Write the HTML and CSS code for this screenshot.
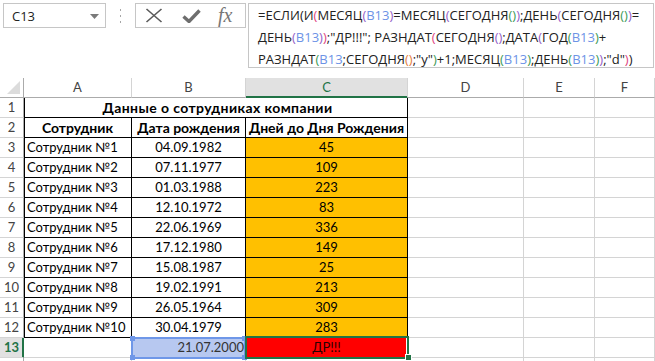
FILE: index.html
```html
<!DOCTYPE html>
<html lang="ru">
<head>
<meta charset="utf-8">
<title>Excel</title>
<link rel="stylesheet" href="styles.css">
</head>
<body>
<div class="fbar">
  <div class="namebox">
    <span class="nb-text">C13</span>
    <svg class="nb-arrow" width="9" height="5" viewBox="0 0 9 5"><path d="M0 0H9L4.5 5Z" fill="#7a7a7a"/></svg>
  </div>
  <div class="grip">
    <svg width="3" height="14" viewBox="0 0 3 14"><rect x="1" y="0" width="1" height="2" fill="#a6a6a6"/><rect x="1" y="6" width="1" height="2" fill="#a6a6a6"/><rect x="1" y="12" width="1" height="2" fill="#a6a6a6"/></svg>
  </div>
  <div class="btns">
    <svg class="ic-x" width="18" height="15" viewBox="0 0 18 15"><path d="M1.5 1L16.5 14M16.5 1L1.5 14" stroke="#5a5a5a" stroke-width="1.6" fill="none"/></svg>
    <svg class="ic-ok" width="19" height="14" viewBox="0 0 19 14"><path d="M1.5 7.5L7 12.5L17.5 1.5" stroke="#6e6e6e" stroke-width="3.4" fill="none"/></svg>
    <span class="fx">fx</span>
  </div>
  <div class="formula">
    <div class="fl">=ЕСЛИ<span class="p1">(</span>И<span class="p2">(</span>МЕСЯЦ<span class="p3">(</span><span class="ref">B13</span><span class="p3">)</span>=МЕСЯЦ<span class="p3">(</span>СЕГОДНЯ<span class="p4">()</span><span class="p3">)</span>;ДЕНЬ<span class="p3">(</span>СЕГОДНЯ<span class="p4">()</span><span class="p3">)</span>=</div>
    <div class="fl">ДЕНЬ<span class="p3">(</span><span class="ref">B13</span><span class="p3">)</span><span class="p2">)</span>;"ДР!!!"; РАЗНДАТ<span class="p2">(</span>СЕГОДНЯ<span class="p3">()</span>;ДАТА<span class="p3">(</span>ГОД<span class="p4">(</span><span class="ref">B13</span><span class="p4">)</span>+</div>
    <div class="fl">РАЗНДАТ<span class="p4">(</span><span class="ref">B13</span>;СЕГОДНЯ<span class="p5">()</span>;"y"<span class="p4">)</span>+1;МЕСЯЦ<span class="p4">(</span><span class="ref">B13</span><span class="p4">)</span>;ДЕНЬ<span class="p4">(</span><span class="ref">B13</span><span class="p4">)</span><span class="p3">)</span>;"d"<span class="p2">)</span><span class="p1">)</span></div>
  </div>
</div>

<div class="sheet">
  <div class="c corner"><span class="tri"></span></div>
  <div class="c ch">A</div>
  <div class="c ch">B</div>
  <div class="c ch ch-sel">C</div>
  <div class="c ch">D</div>
  <div class="c ch">E</div>
  <div class="c ch">F</div>

  <div class="c rh">1</div>
  <div class="c t tl m b title span3">Данные о сотрудниках компании</div>
  <div class="c"></div><div class="c"></div><div class="c"></div>

  <div class="c rh">2</div>
  <div class="c t tl m b">Сотрудник</div>
  <div class="c t m b">Дата рождения</div>
  <div class="c t m b">Дней до Дня Рождения</div>
  <div class="c"></div><div class="c"></div><div class="c"></div>

  <div class="c rh">3</div>
  <div class="c t tl l">Сотрудник №1</div>
  <div class="c t m">04.09.1982</div>
  <div class="c t m o">45</div>
  <div class="c"></div><div class="c"></div><div class="c"></div>

  <div class="c rh">4</div>
  <div class="c t tl l">Сотрудник №2</div>
  <div class="c t m">07.11.1977</div>
  <div class="c t m o">109</div>
  <div class="c"></div><div class="c"></div><div class="c"></div>

  <div class="c rh">5</div>
  <div class="c t tl l">Сотрудник №3</div>
  <div class="c t m">01.03.1988</div>
  <div class="c t m o">223</div>
  <div class="c"></div><div class="c"></div><div class="c"></div>

  <div class="c rh">6</div>
  <div class="c t tl l">Сотрудник №4</div>
  <div class="c t m">12.10.1972</div>
  <div class="c t m o">83</div>
  <div class="c"></div><div class="c"></div><div class="c"></div>

  <div class="c rh">7</div>
  <div class="c t tl l">Сотрудник №5</div>
  <div class="c t m">22.06.1969</div>
  <div class="c t m o">336</div>
  <div class="c"></div><div class="c"></div><div class="c"></div>

  <div class="c rh">8</div>
  <div class="c t tl l">Сотрудник №6</div>
  <div class="c t m">17.12.1980</div>
  <div class="c t m o">149</div>
  <div class="c"></div><div class="c"></div><div class="c"></div>

  <div class="c rh">9</div>
  <div class="c t tl l">Сотрудник №7</div>
  <div class="c t m">15.08.1987</div>
  <div class="c t m o">25</div>
  <div class="c"></div><div class="c"></div><div class="c"></div>

  <div class="c rh">10</div>
  <div class="c t tl l">Сотрудник №8</div>
  <div class="c t m">19.02.1991</div>
  <div class="c t m o">213</div>
  <div class="c"></div><div class="c"></div><div class="c"></div>

  <div class="c rh">11</div>
  <div class="c t tl l">Сотрудник №9</div>
  <div class="c t m">26.05.1964</div>
  <div class="c t m o">309</div>
  <div class="c"></div><div class="c"></div><div class="c"></div>

  <div class="c rh">12</div>
  <div class="c t tl l">Сотрудник №10</div>
  <div class="c t m">30.04.1979</div>
  <div class="c t m o">283</div>
  <div class="c"></div><div class="c"></div><div class="c"></div>

  <div class="c rh rh-sel">13</div>
  <div class="c"></div>
  <div class="c r refcell">21.07.2000<span class="refbox"><i class="h h1"></i><i class="h h2"></i><i class="h h3"></i><i class="h h4"></i></span></div>
  <div class="c m red">ДР!!!<span class="active"><i class="fill"></i></span></div>
  <div class="c"></div><div class="c"></div><div class="c"></div>

  <div class="c rh"></div>
  <div class="c"></div><div class="c"></div><div class="c"></div>
  <div class="c"></div><div class="c"></div><div class="c"></div>
</div>
</body>
</html>
```

FILE: styles.css
```css
html, body {
  margin: 0;
  padding: 0;
  background: #fff;
  overflow: hidden;
}
body {
  font-family: Lato, "Noto Sans", sans-serif;
  color: #000;
}

/* ---------- formula bar ---------- */
.fbar {
  display: flex;
  align-items: flex-start;
  height: 78px;
  padding-top: 3px;
  box-sizing: border-box;
}
.namebox {
  margin-left: 3px;
  width: 103px;
  height: 25px;
  box-sizing: border-box;
  border: 1px solid #c6c6c6;
  display: flex;
  align-items: center;
  justify-content: space-between;
  padding: 0 6px 0 8px;
  font-family: "Open Sans", sans-serif;
  font-size: 13px;
  color: #222;
}
.nb-arrow { margin-top: 1px; }
.grip {
  width: 29px;
  display: flex;
  justify-content: center;
  padding-top: 6px;
}
.btns {
  width: 111px;
  height: 25px;
  box-sizing: border-box;
  border: 1px solid #c6c6c6;
  display: flex;
  align-items: center;
  padding-left: 9px;
}
.ic-x { margin-right: 19px; }
.ic-ok { margin-right: 17px; margin-top: 1px; }
.fx {
  font-family: "Liberation Serif", serif;
  font-style: italic;
  font-size: 20px;
  color: #777;
  line-height: 20px;
  margin-top: -2px;
}
.formula {
  margin-left: 2px;
  margin-right: 1px;
  flex: 1;
  height: 65px;
  box-sizing: border-box;
  border: 1px solid #c6c6c6;
  padding: 0 0 0 9px;
  font-family: "Open Sans", sans-serif;
  font-size: 13px;
  line-height: 22px;
  color: #222;
  white-space: nowrap;
  overflow: hidden;
}
.fl { height: 22px; }
.p1 { color: #222; }
.p2 { color: #e0447f; }
.p3 { color: #9460c8; }
.p4 { color: #3c9a55; }
.p5 { color: #e57e3c; }
.ref { color: #6d93e6; }

/* ---------- sheet ---------- */
.sheet {
  display: grid;
  grid-template-columns: 24px 108px 114px 162px 116px 71px 1fr;
  grid-auto-rows: 20px;
}
.c {
  box-sizing: border-box;
  border-right: 1px solid #d4d4d4;
  border-bottom: 1px solid #d4d4d4;
  font-size: 13px;
  line-height: 19px;
  white-space: nowrap;
  overflow: hidden;
  padding: 0 2px;
}
.corner {
  position: relative;
  border-bottom-color: #ababab;
  border-right-color: #ababab;
}
.tri {
  position: absolute;
  right: 3px;
  bottom: 3px;
  width: 0;
  height: 0;
  border-left: 13px solid transparent;
  border-bottom: 13px solid #dcdcdc;
}
.ch {
  text-align: center;
  color: #444;
  border-bottom-color: #ababab;
  font-size: 13px;
}
.ch-sel {
  background: #e1e1e1;
  color: #217346;
  border-bottom-color: #217346;
  box-shadow: inset 0 -1px 0 #217346;
}
.rh {
  text-align: center;
  color: #444;
  border-right-color: #ababab;
  padding: 0;
}
.rh-sel {
  background: #e1e1e1;
  color: #217346;
  font-weight: 700;
  border-right-color: #217346;
  box-shadow: inset -1px 0 0 #217346;
}
.t {
  border-right-color: #000;
  border-bottom-color: #000;
}
.tl { box-shadow: inset 1px 0 0 #000; }
.span3 { grid-column: span 3; }
.l { padding-left: 3px; }
.m { text-align: center; }
.r { text-align: right; }
.b { font-weight: 700; font-size: 14px; }
.title { letter-spacing: 0.4px; padding-left: 6px; }
.o { background: #ffc000; }

.refcell {
  position: relative;
  overflow: visible;
  background: #b7c8f0;
  color: #333;
  padding-right: 1px;
}
.refbox {
  position: absolute;
  left: -1px;
  top: -1px;
  right: -1px;
  bottom: -2px;
  border: 2px solid #6f97e8;
}
.h {
  position: absolute;
  width: 5px;
  height: 5px;
  background: #6f97e8;
}
.h1 { left: -3px; top: -3px; }
.h2 { right: -3px; top: -3px; }
.h3 { left: -3px; bottom: -3px; }
.h4 { right: -3px; bottom: -3px; }

.red {
  position: relative;
  overflow: visible;
  background: #ff0000;
  color: #2a0000;
  z-index: 2;
}
.active {
  position: absolute;
  left: -1px;
  top: -2px;
  right: -2px;
  bottom: -2px;
  border: 2px solid #217346;
  box-shadow: inset -1px 0 0 #fff;
}
.fill {
  position: absolute;
  right: -5px;
  bottom: -4px;
  width: 5px;
  height: 5px;
  background: #217346;
  border: 1px solid #fff;
}
```
